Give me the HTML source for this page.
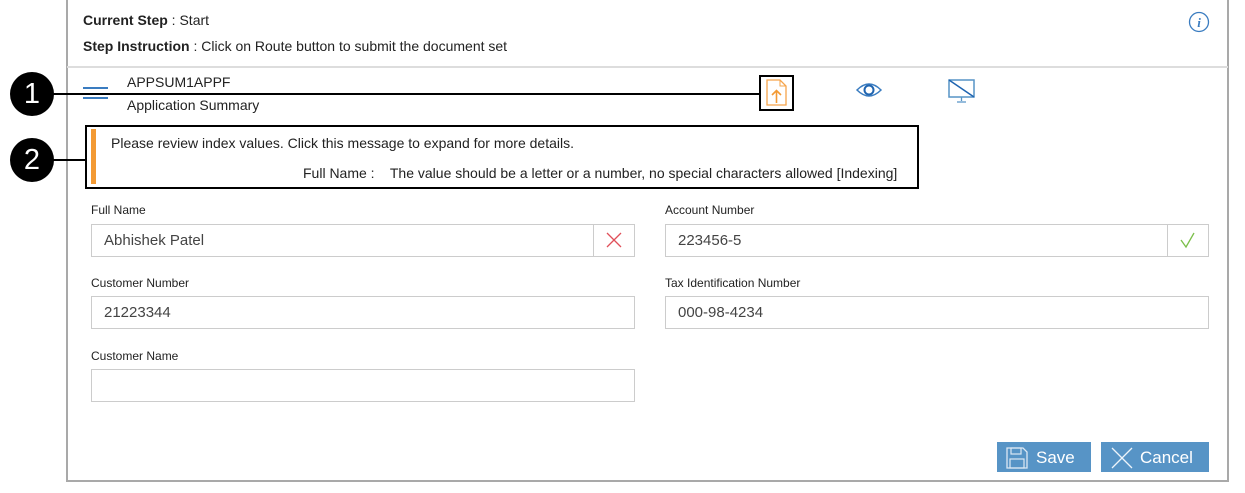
<!DOCTYPE html>
<html><head><style>
body{margin:0;width:1245px;height:493px;background:#fff;font-family:"Liberation Sans",Arial,sans-serif;color:#222;position:relative;overflow:hidden}
.a{position:absolute}
.panel{left:66px;top:-2px;width:1163px;height:484px;border:2px solid #a9a9a9;box-sizing:border-box}
.t{font-size:14px;white-space:nowrap}
.lbl{font-size:12px;color:#222}
.inp{border:1px solid #ccc;box-sizing:border-box;height:33px;font-size:15px;color:#444;padding-left:12px;line-height:31px}
.circ{width:44px;height:44px;border-radius:50%;background:#000;color:#fff;font-size:29px;text-align:center;line-height:44px}
.btn{background:#5794c6;color:#fff;font-size:17px;height:30px;line-height:32px}
</style></head><body>
<div class="a panel"></div>
<div class="a t" style="left:83px;top:12px"><b>Current Step</b> : Start</div>
<div class="a t" style="left:83px;top:38px"><b>Step Instruction</b> : Click on Route button to submit the document set</div>
<svg class="a" style="left:1188px;top:11px" width="22" height="22"><circle cx="11" cy="11" r="9.5" fill="none" stroke="#3a7cc0" stroke-width="1.3"/><text x="11" y="16" font-size="13" font-style="italic" font-weight="bold" fill="#3a7cc0" text-anchor="middle" font-family="Liberation Serif">i</text></svg>
<div class="a" style="left:67px;top:66px;width:1161px;height:2px;background:#ddd"></div>
<div class="a" style="left:83px;top:87px;width:25px;height:2px;background:#3a7cc0"></div>
<div class="a" style="left:83px;top:97px;width:25px;height:2px;background:#3a7cc0"></div>
<div class="a t" style="left:127px;top:74px">APPSUM1APPF</div>
<div class="a t" style="left:127px;top:97px">Application Summary</div>
<div class="a circ" style="left:10px;top:72px">1</div>
<div class="a" style="left:52px;top:93px;width:708px;height:2px;background:#000"></div>
<div class="a" style="left:759px;top:75px;width:35px;height:36px;border:2px solid #000;box-sizing:border-box"></div>
<svg class="a" style="left:766px;top:79px" width="22" height="28"><path d="M1 1h13l6 6v19H1z" fill="none" stroke="#f6a54b" stroke-width="1.3"/><path d="M14 1v6h6" fill="none" stroke="#f6a54b" stroke-width="1"/><path d="M10.5 24V12M6 16l4.5-4.5L15 16" fill="none" stroke="#f39a34" stroke-width="1.6"/></svg>
<svg class="a" style="left:855px;top:81px" width="28" height="18"><path d="M2 9Q14 -3 26 9Q14 21 2 9z" fill="none" stroke="#3a7cc0" stroke-width="1.5"/><circle cx="14" cy="9" r="4.5" fill="none" stroke="#1f64b0" stroke-width="2"/></svg>
<svg class="a" style="left:947px;top:78px" width="30" height="26"><rect x="2" y="2" width="25" height="17" fill="none" stroke="#5794c6" stroke-width="1.5"/><path d="M2 2L27 19" stroke="#1f64b0" stroke-width="1.5"/><path d="M14.5 19v4M10 24h9" stroke="#5794c6" stroke-width="1.3"/></svg>
<div class="a circ" style="left:10px;top:138px">2</div>
<div class="a" style="left:52px;top:159px;width:34px;height:2px;background:#000"></div>
<div class="a" style="left:85px;top:125px;width:834px;height:64px;border:2px solid #000;box-sizing:border-box"></div>
<div class="a" style="left:91px;top:129px;width:5px;height:55px;background:#f39a34"></div>
<div class="a t" style="left:111px;top:135px">Please review index values. Click this message to expand for more details.</div>
<div class="a t" style="left:303px;top:165px">Full Name :&nbsp;&nbsp;&nbsp; The value should be a letter or a number, no special characters allowed [Indexing]</div>
<div class="a lbl" style="left:91px;top:203px">Full Name</div>
<div class="a inp" style="left:91px;top:224px;width:544px">Abhishek Patel</div>
<div class="a" style="left:593px;top:225px;width:1px;height:31px;background:#ccc"></div>
<svg class="a" style="left:604px;top:230px" width="20" height="20"><path d="M3 3L17 17M17 3L3 17" stroke="#e0505a" stroke-width="1.3"/></svg>
<div class="a lbl" style="left:665px;top:203px">Account Number</div>
<div class="a inp" style="left:665px;top:224px;width:544px">223456-5</div>
<div class="a" style="left:1167px;top:225px;width:1px;height:31px;background:#ccc"></div>
<svg class="a" style="left:1178px;top:230px" width="20" height="20"><path d="M3 10L8 17L16 3" fill="none" stroke="#7bbf4a" stroke-width="1.3"/></svg>
<div class="a lbl" style="left:91px;top:276px">Customer Number</div>
<div class="a inp" style="left:91px;top:296px;width:544px">21223344</div>
<div class="a lbl" style="left:665px;top:276px">Tax Identification Number</div>
<div class="a inp" style="left:665px;top:296px;width:544px">000-98-4234</div>
<div class="a lbl" style="left:91px;top:349px">Customer Name</div>
<div class="a inp" style="left:91px;top:369px;width:544px"></div>
<div class="a btn" style="left:997px;top:442px;width:94px"><svg style="position:absolute;left:9px;top:5px" width="22" height="22"><path d="M1 1h16l4 4v16H1z" fill="none" stroke="#dce8f3" stroke-width="1.3"/><rect x="5" y="1" width="10" height="6" fill="none" stroke="#dce8f3" stroke-width="1.2"/><rect x="4" y="12" width="14" height="9" fill="none" stroke="#dce8f3" stroke-width="1.2"/></svg><span style="position:absolute;left:39px">Save</span></div>
<div class="a btn" style="left:1101px;top:442px;width:108px"><svg style="position:absolute;left:9px;top:4px" width="24" height="24"><path d="M2 2L22 22M22 2L2 22" stroke="#eef4fa" stroke-width="1.3"/></svg><span style="position:absolute;left:39px">Cancel</span></div>
</body></html>
